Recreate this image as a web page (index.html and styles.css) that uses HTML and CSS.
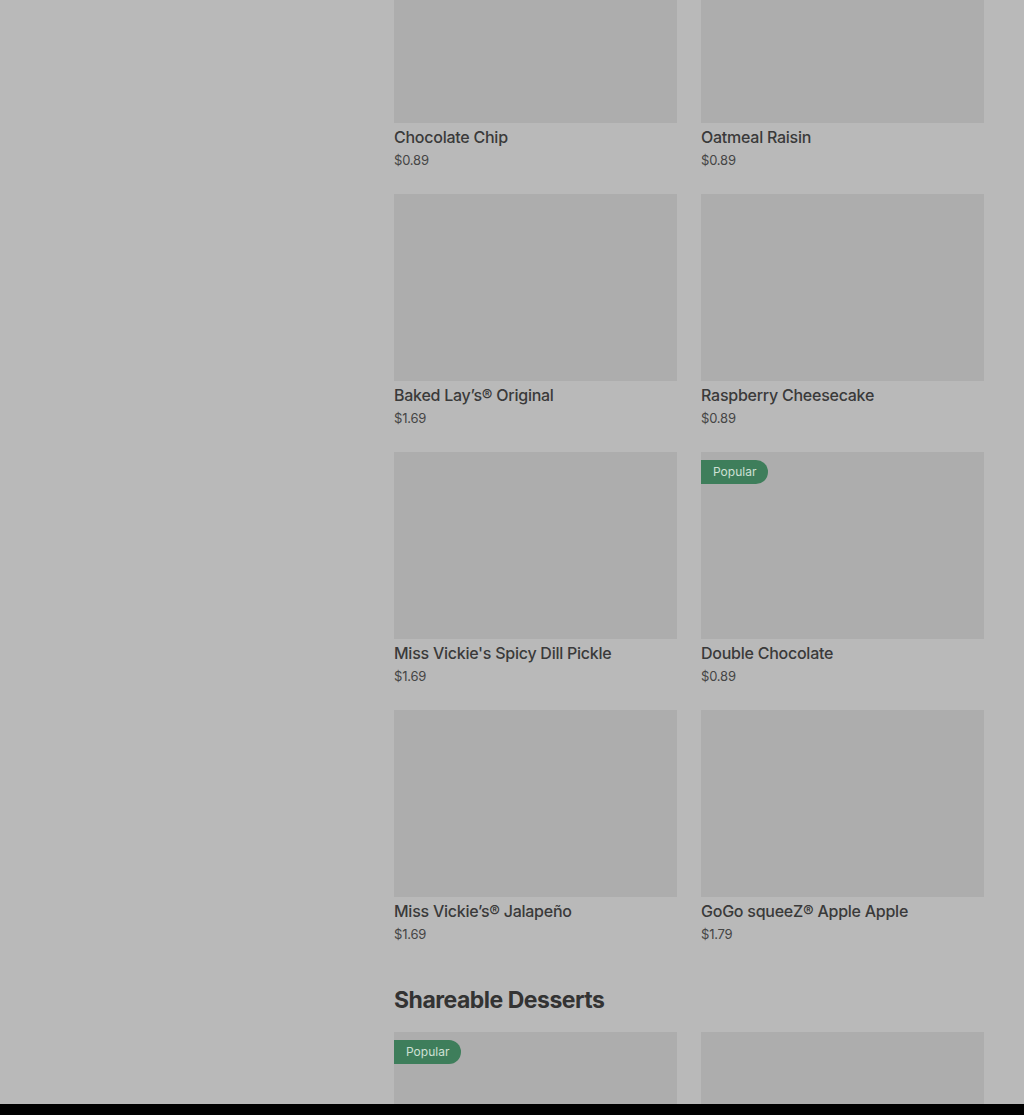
FILE: index.html
```html
<!DOCTYPE html>
<html lang="en">
<head>
    <meta charset="UTF-8">
    <meta name="viewport" content="width=device-width, initial-scale=1.0">
    <title>Menu</title>
    <link rel="stylesheet" href="styles.css">
</head>
<body>
    <div class="page">
        <aside class="sidebar"></aside>
        <main class="menu">
            <div class="grid first">
                <div class="item">
                    <div class="thumb"></div>
                    <p class="name">Chocolate Chip</p>
                    <p class="price">$0.89</p>
                </div>
                <div class="item">
                    <div class="thumb"></div>
                    <p class="name">Oatmeal Raisin</p>
                    <p class="price">$0.89</p>
                </div>
                <div class="item">
                    <div class="thumb"></div>
                    <p class="name">Baked Lay’s® Original</p>
                    <p class="price">$1.69</p>
                </div>
                <div class="item">
                    <div class="thumb"></div>
                    <p class="name">Raspberry Cheesecake</p>
                    <p class="price">$0.89</p>
                </div>
                <div class="item">
                    <div class="thumb"></div>
                    <p class="name">Miss Vickie's Spicy Dill Pickle</p>
                    <p class="price">$1.69</p>
                </div>
                <div class="item">
                    <div class="thumb"><span class="badge">Popular</span></div>
                    <p class="name">Double Chocolate</p>
                    <p class="price">$0.89</p>
                </div>
                <div class="item">
                    <div class="thumb"></div>
                    <p class="name">Miss Vickie’s® Jalapeño</p>
                    <p class="price">$1.69</p>
                </div>
                <div class="item">
                    <div class="thumb"></div>
                    <p class="name">GoGo squeeZ® Apple Apple</p>
                    <p class="price">$1.79</p>
                </div>
            </div>

            <h2 class="section-title">Shareable Desserts</h2>
            <div class="grid">
                <div class="item">
                    <div class="thumb"><span class="badge">Popular</span></div>
                </div>
                <div class="item">
                    <div class="thumb"></div>
                </div>
            </div>
        </main>
    </div>
    <div class="bottom-bar"></div>
</body>
</html>
```

FILE: styles.css
```css
html, body {
    margin: 0;
    padding: 0;
}
body {
    background-color: #b9b9b9;
    font-family: Inter, "Noto Sans", sans-serif;
    color: #3a3a3a;
}
.page {
    display: flex;
    height: 1115px;
    overflow: hidden;
}
.sidebar {
    width: 394px;
    flex-shrink: 0;
}
.menu {
    width: 590px;
}
.grid {
    display: grid;
    grid-template-columns: 283px 283px;
    column-gap: 24px;
    row-gap: 24px;
}
.grid.first {
    margin-top: -64px; /* list is scrolled */
}
.item p {
    margin: 0;
}
.thumb {
    position: relative;
    height: 187px;
    background-color: #adadad;
    margin-bottom: 3px;
}
.name {
    font-size: 16px;
    font-weight: 500;
    line-height: 22px;
    letter-spacing: -0.25px;
    color: #3a3a3a;
    margin-bottom: 2px !important;
}
.price {
    font-size: 13px;
    line-height: 20px;
    letter-spacing: -0.2px;
    color: #454545;
}
.badge {
    position: absolute;
    top: 8px;
    left: 0;
    height: 24px;
    line-height: 24px;
    padding: 0 12px;
    font-size: 12px;
    color: #cfe0d5;
    background-color: #3e7e5b;
    border-radius: 0 12px 12px 0;
}
.section-title {
    margin: 40px 0 16px;
    font-size: 23px;
    line-height: 32px;
    font-weight: 700;
    color: #333;
    letter-spacing: -0.5px;
}
.bottom-bar {
    position: fixed;
    left: 0;
    right: 0;
    bottom: 0;
    height: 11px;
    background-color: #000;
}
```
